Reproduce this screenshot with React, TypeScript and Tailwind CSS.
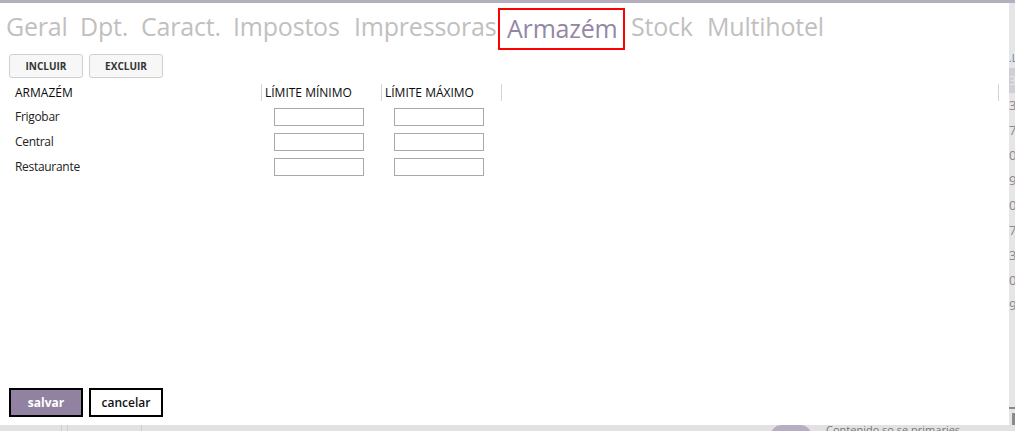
import React from "react";

const tabs = [
  { label: "Geral", w: "w-[74px]" },
  { label: "Dpt.", w: "w-[61px]" },
  { label: "Caract.", w: "w-[92px]" },
  { label: "Impostos", w: "w-[121px]" },
  { label: "Impressoras", w: "w-[144px]" },
];

const afterTabs = [
  { label: "Stock", w: "w-[76px]" },
  { label: "Multihotel", w: "w-[130px]" },
];

const rows = ["Frigobar", "Central", "Restaurante"];
const digits = ["3", "7", "0", "9", "0", "7", "3", "0", "9"];

const App: React.FC = () => {
  return (
    <div
      className="w-[1015px] h-[431px] bg-[#e2e2e2] overflow-hidden flex flex-col"
      style={{ fontFamily: '"Open Sans", "Noto Sans", sans-serif' }}
    >
      <div className="h-[3px] bg-[#b4afbc] shrink-0" />
      <div className="flex h-[422px] shrink-0">
        {/* modal */}
        <div className="w-[1009px] bg-white flex flex-col">
          {/* tabs */}
          <div className="flex items-start h-[47px] pt-[5px] pl-[6px] text-[25px] leading-[37px] tracking-[-0.2px] text-[#c2bfc0]">
            {tabs.map((t) => (
              <div key={t.label} className={`${t.w} shrink-0 whitespace-nowrap`}>
                {t.label}
              </div>
            ))}
            <div className="w-[127px] h-[42px] shrink-0 border-2 border-[#ff0000] pl-[7px] text-[#9487a6] whitespace-nowrap">
              Armazém
            </div>
            <div className="w-[6px] shrink-0" />
            {afterTabs.map((t) => (
              <div key={t.label} className={`${t.w} shrink-0 whitespace-nowrap`}>
                {t.label}
              </div>
            ))}
          </div>

          {/* action buttons */}
          <div className="flex gap-[6px] pl-[9px] mt-[4px]">
            <button className="w-[74px] h-[24px] rounded-[3px] border border-[#cfcfcf] bg-[#f7f7f7] text-[10px] font-bold text-[#333]">
              INCLUIR
            </button>
            <button className="w-[74px] h-[24px] rounded-[3px] border border-[#cfcfcf] bg-[#f7f7f7] text-[10px] font-bold text-[#333]">
              EXCLUIR
            </button>
          </div>

          {/* table header */}
          <div className="flex items-center h-[17px] mt-[6px] text-[12px] text-[#0a0a0a] font-medium">
            <div className="w-[261px] pl-[15px]">ARMAZÉM</div>
            <div className="w-[120px] h-full border-l border-[#d4d4d4] pl-[3px] flex items-center">LÍMITE MÍNIMO</div>
            <div className="w-[120px] h-full border-l border-[#d4d4d4] pl-[3px] flex items-center">LÍMITE MÁXIMO</div>
            <div className="w-[497px] h-full border-l border-[#d4d4d4]" />
            <div className="h-full border-l border-[#d4d4d4]" />
          </div>

          {/* rows */}
          <div className="flex flex-col mt-[3px]">
            {rows.map((r) => (
              <div key={r} className="flex items-center h-[25px] text-[12px] text-[#222] tracking-[-0.3px]">
                <div className="w-[274px] pl-[15px] pt-[1px]">{r}</div>
                <input className="w-[90px] h-[18px] border border-[#a9a9a9] outline-none" />
                <div className="w-[30px]" />
                <input className="w-[90px] h-[18px] border border-[#a9a9a9] outline-none" />
              </div>
            ))}
          </div>

          <div className="flex-1" />

          {/* footer buttons */}
          <div className="flex gap-[6px] pl-[9px] mb-[8px]">
            <button className="w-[74px] h-[29px] border-2 border-black bg-[#9282a2] text-white text-[12px] font-bold">
              salvar
            </button>
            <button className="w-[74px] h-[29px] border-2 border-black bg-white text-[#111] text-[12px] font-semibold">
              cancelar
            </button>
          </div>
        </div>

        {/* background page strip on the right */}
        <div className="w-[6px] overflow-hidden bg-[#e6e6e6] text-[13px] leading-[25px] text-[#8c8398] flex flex-col">
          <div className="h-[45px]" />
          <div className="h-[20px] text-[#5b7fb0] text-[10px] leading-[20px]">.L</div>
          <div className="h-[25px] bg-[#d2ced6] text-[#e8e4ec] leading-[25px]">3</div>
          {digits.map((d, i) => (
            <div key={i} className="h-[25px]">{d}</div>
          ))}
          <div className="flex-1" />
          <div className="h-[2px] bg-[#8a8a8a] mb-[4px]" />
          <div className="h-[12px] ml-[3px] bg-[#8a8a8a]" />
        </div>
      </div>

      {/* background page bottom strip */}
      <div className="flex-1 flex bg-[#e2e2e2]">
        <div className="w-[62px] border-r border-[#cfcfcf]" />
        <div className="w-[5px]" />
        <div className="w-[75px] border-l border-[#cfcfcf] border-r" />
        <div className="w-[629px]" />
        <div className="w-[40px] bg-[#b8aec4] rounded-t-full" />
        <div className="w-[15px]" />
        <div className="text-[11px] leading-[10px] text-[#777] whitespace-nowrap overflow-hidden">Contenido so se primaries</div>
      </div>
    </div>
  );
};

export default App;
